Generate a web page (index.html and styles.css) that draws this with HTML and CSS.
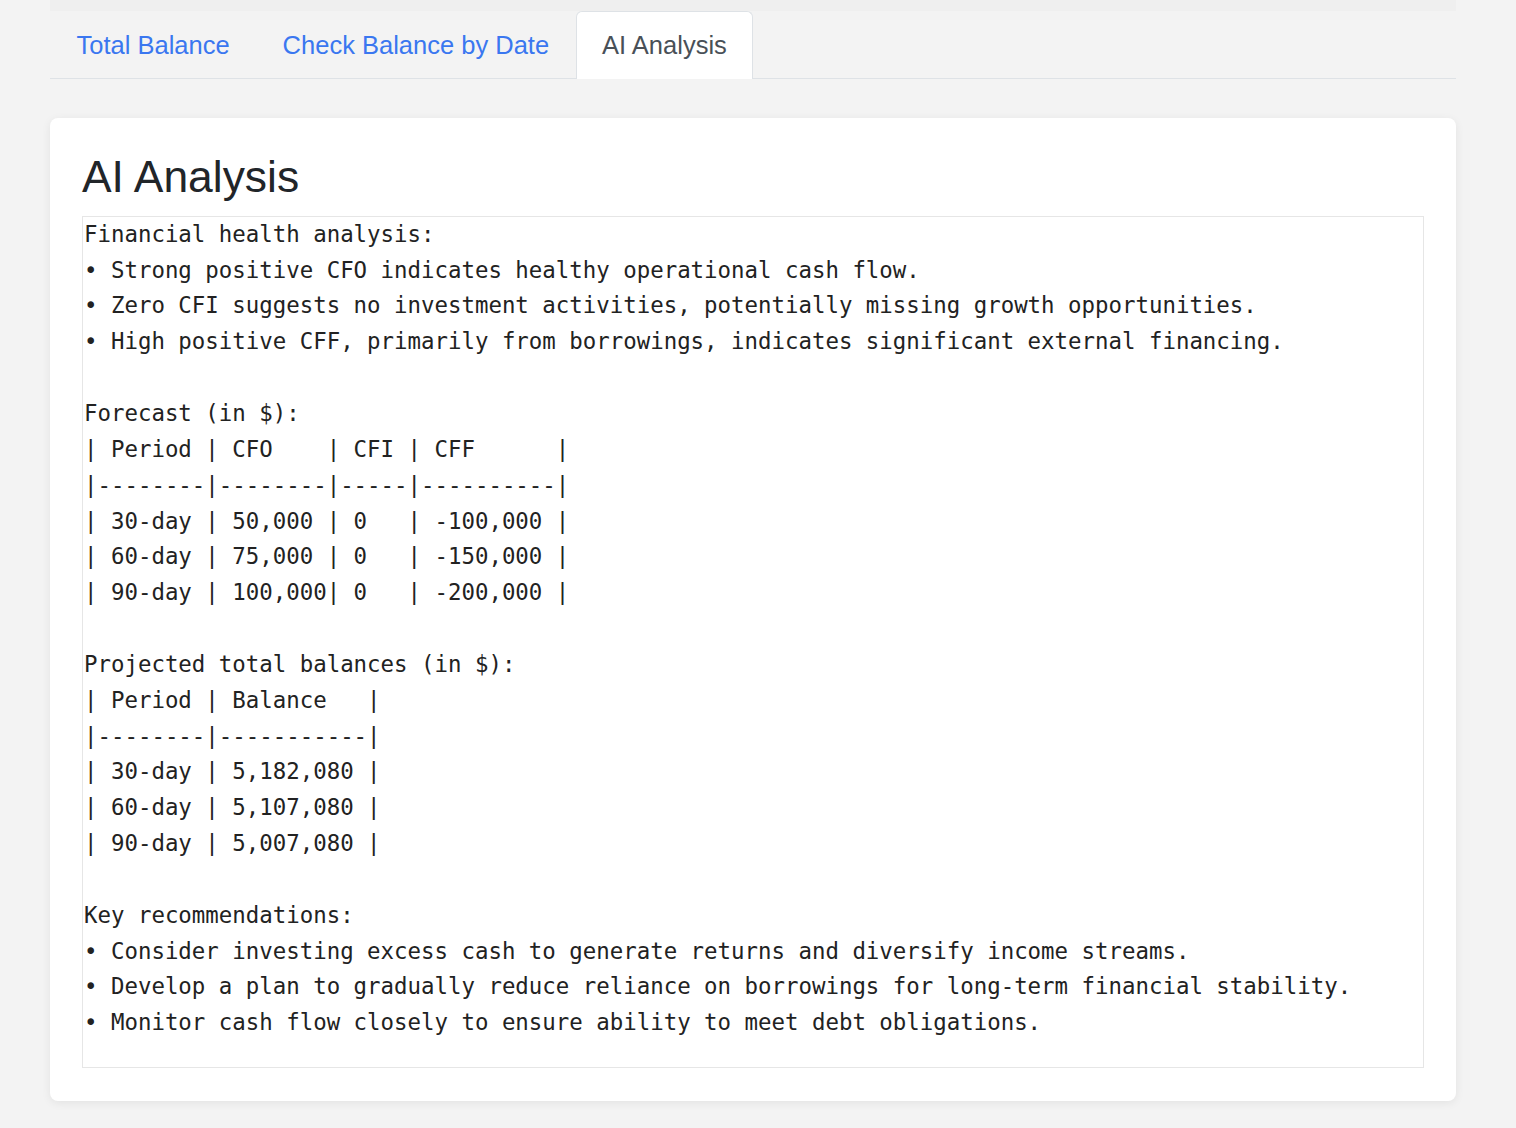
FILE: index.html
```html
<!DOCTYPE html>
<html>
<head>
<meta charset="utf-8">
<link rel="stylesheet" href="styles.css">
</head>
<body>
<div class="wrap">
  <div class="strip"></div>
  <nav class="tabs">
    <a class="tab">Total Balance</a>
    <a class="tab">Check Balance by Date</a>
    <a class="tab active">AI Analysis</a>
  </nav>
  <section class="card">
    <h1 class="title">AI Analysis</h1>
<pre class="analysis">Financial health analysis:
• Strong positive CFO indicates healthy operational cash flow.
• Zero CFI suggests no investment activities, potentially missing growth opportunities.
• High positive CFF, primarily from borrowings, indicates significant external financing.

Forecast (in $):
| Period | CFO    | CFI | CFF      |
|--------|--------|-----|----------|
| 30-day | 50,000 | 0   | -100,000 |
| 60-day | 75,000 | 0   | -150,000 |
| 90-day | 100,000| 0   | -200,000 |

Projected total balances (in $):
| Period | Balance   |
|--------|-----------|
| 30-day | 5,182,080 |
| 60-day | 5,107,080 |
| 90-day | 5,007,080 |

Key recommendations:
• Consider investing excess cash to generate returns and diversify income streams.
• Develop a plan to gradually reduce reliance on borrowings for long-term financial stability.
• Monitor cash flow closely to ensure ability to meet debt obligations.</pre>
  </section>
</div>
</body>
</html>
```

FILE: styles.css
```css
html, body {
  margin: 0;
  padding: 0;
  background: #f3f3f3;
}
body {
  font-family: "Liberation Sans", Arial, sans-serif;
  color: #212529;
}
.wrap {
  width: 1406px;
  margin-left: 50px;
  padding-bottom: 28px;
}
.strip {
  height: 11px;
  background: #efefef;
}
.tabs {
  display: flex;
  border-bottom: 1px solid #dee2e6;
  height: 67px;
}
.tab {
  display: flex;
  align-items: center;
  height: 67px;
  box-sizing: border-box;
  padding: 0 25.5px;
  font-size: 25.5px;
  color: #3a77f0;
  border: 1px solid transparent;
  border-bottom: none;
  border-radius: 6px 6px 0 0;
}
.tab.active {
  color: #495057;
  background: #fff;
  border-color: #dee2e6;
  height: 68px;
}
.card {
  margin-top: 39px;
  background: #fff;
  border-radius: 8px;
  padding: 32px 32px 33px;
  box-shadow: 0 2px 10px rgba(0, 0, 0, 0.07);
}
.title {
  margin: 0 0 12px 0;
  font-size: 44.4px;
  line-height: 53.76px;
  font-weight: 400;
  color: #212529;
}
.analysis {
  margin: 0;
  border: 1px solid #e6e6e6;
  padding: 0 1px 26px 1px;
  font-family: "DejaVu Sans Mono", monospace;
  font-size: 22.4px;
  line-height: 35.84px;
  color: #222;
  white-space: pre-wrap;
}
```
